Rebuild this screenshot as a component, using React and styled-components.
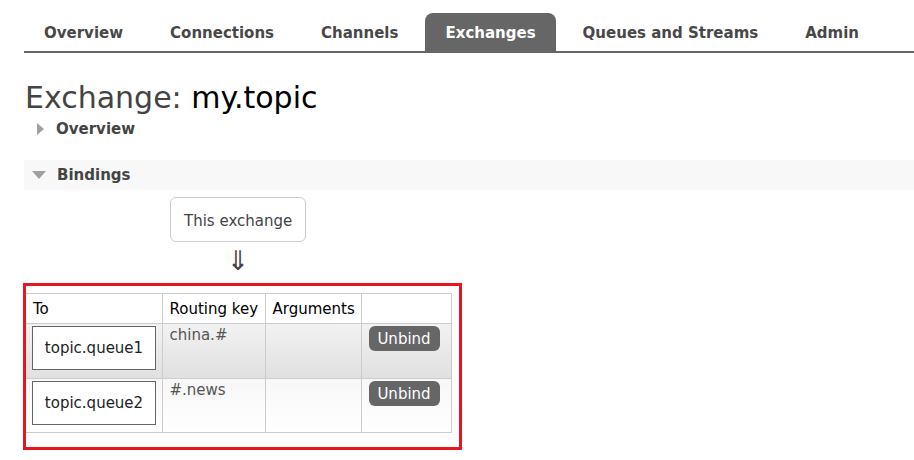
import React from "react";
import styled, { createGlobalStyle } from "styled-components";

const GlobalStyle = createGlobalStyle`
  body {
    margin: 0;
    background: #fff;
    font-family: "DejaVu Sans", Verdana, sans-serif;
    color: #444;
  }
`;

const Page = styled.div`
  padding: 13px 0 0 24px;
`;

const Nav = styled.ul`
  display: flex;
  list-style: none;
  margin: 0;
  padding: 0;
  border-bottom: 2px solid #666;
`;

const Tab = styled.li`
  height: 38px;
  line-height: 40px;
  padding: 0 20px;
  margin-right: 7px;
  font-size: 15px;
  font-weight: bold;
  border-radius: 8px 8px 0 0;
  color: ${(p) => (p.$active ? "#fff" : "#484848")};
  background: ${(p) => (p.$active ? "#666" : "transparent")};
`;

const Title = styled.h1`
  margin: 28px 0 0 1px;
  font-size: 30px;
  font-weight: normal;
  line-height: 34px;
  color: #444;
  span {
    color: #000;
  }
`;

const Section = styled.div`
  display: flex;
  align-items: center;
  gap: ${(p) => (p.$open ? "11px" : "12px")};
  height: 30px;
  padding-left: ${(p) => (p.$open ? "8px" : "13px")};
  margin-top: ${(p) => p.$top}px;
  background: ${(p) => (p.$open ? "#f8f8f8" : "transparent")};
  font-size: 15px;
  font-weight: bold;
  color: #444;
`;

const Arrow = styled.span`
  width: 0;
  height: 0;
  border-style: solid;
  ${(p) =>
    p.$open
      ? "border-width: 8px 7px 0 7px; border-color: #a0a0a0 transparent transparent transparent;"
      : "border-width: 6px 0 6px 7px; border-color: transparent transparent transparent #a0a0a0;"}
`;

const Flow = styled.div`
  display: flex;
  flex-direction: column;
  align-items: flex-start;
  padding-left: 146px;
  margin-top: 7px;
`;

const ExchangeBox = styled.div`
  border: 1px solid #ccc;
  border-radius: 6px;
  padding: 0 13px;
  height: 43px;
  line-height: 46px;
  font-size: 15px;
  color: #444;
`;

const Down = styled.div`
  width: 136px;
  padding-top: 2px;
  text-align: center;
  font-size: 27px;
  line-height: 34px;
  color: #444;
`;

const Highlight = styled.div`
  display: inline-block;
  margin: 5px 0 0 -1px;
  padding: 7px 7px 14px 0;
  border: 3px solid #e8141e;
`;

const Table = styled.table`
  width: 425px;
  border-collapse: collapse;
  table-layout: fixed;
  font-size: 15px;
  border-right: 1px solid #ccc;
  th,
  td {
    box-sizing: border-box;
    border: 1px solid #ccc;
    border-right: none;
    text-align: left;
    vertical-align: top;
    white-space: nowrap;
  }
  th {
    font-weight: normal;
    color: #000;
    height: 30px;
    padding: 0 7px;
    vertical-align: middle;
  }
  th:first-child,
  td:first-child {
    border-left: none;
  }
`;

const Col = styled.col`
  width: ${(p) => p.$w}px;
`;

const Row = styled.tr`
  background: ${(p) =>
    p.$alt
      ? "linear-gradient(#f2f2f2, #e0e0e0)"
      : "linear-gradient(#f7f7f7, #ffffff)"};
  td {
    height: ${(p) => (p.$alt ? 55 : 54)}px;
    padding: 2px 6px 0 7px;
    color: #555;
  }
  td:first-child {
    padding-left: 6px;
  }
`;

const Queue = styled.div`
  width: 124px;
  height: 44px;
  line-height: 43px;
  box-sizing: border-box;
  border: 1px solid #666;
  background: #fff;
  text-align: center;
  color: #222;
`;

const Unbind = styled.button`
  background: #666;
  color: #fff;
  border: none;
  border-radius: 6px;
  height: 25px;
  width: 71px;
  padding: 0;
  font-family: inherit;
  font-size: 15px;
`;

const tabs = [
  "Overview",
  "Connections",
  "Channels",
  "Exchanges",
  "Queues and Streams",
  "Admin",
];

const bindings = [
  { queue: "topic.queue1", key: "china.#" },
  { queue: "topic.queue2", key: "#.news" },
];

export default function App() {
  return (
    <Page>
      <GlobalStyle />
      <Nav>
        {tabs.map((t) => (
          <Tab key={t} $active={t === "Exchanges"}>
            {t}
          </Tab>
        ))}
      </Nav>
      <Title>
        Exchange: <span>my.topic</span>
      </Title>
      <Section $top={-1}>
        <Arrow />
        Overview
      </Section>
      <Section $open $top={16}>
        <Arrow $open />
        Bindings
      </Section>
      <Flow>
        <ExchangeBox>This exchange</ExchangeBox>
        <Down>⇓</Down>
      </Flow>
      <Highlight>
        <Table>
          <colgroup>
            <Col $w={136} />
            <Col $w={103} />
            <Col $w={96} />
            <Col $w={90} />
          </colgroup>
          <thead>
            <tr>
              <th>To</th>
              <th>Routing key</th>
              <th>Arguments</th>
              <th></th>
            </tr>
          </thead>
          <tbody>
            {bindings.map((b, i) => (
              <Row key={b.queue} $alt={i === 0}>
                <td>
                  <Queue>{b.queue}</Queue>
                </td>
                <td>{b.key}</td>
                <td></td>
                <td>
                  <Unbind>Unbind</Unbind>
                </td>
              </Row>
            ))}
          </tbody>
        </Table>
      </Highlight>
    </Page>
  );
}
